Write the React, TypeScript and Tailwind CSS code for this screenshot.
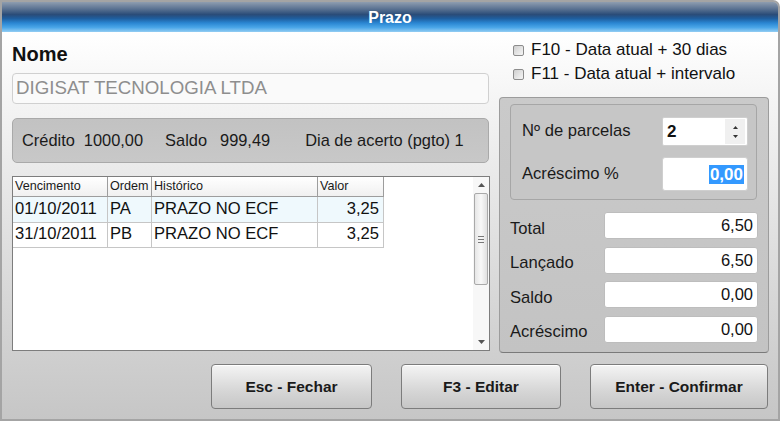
import React from "react";

const font = { fontFamily: '"Liberation Sans", Arial, sans-serif' };

function Field({ value, className = "" }: { value: string; className?: string }) {
  return (
    <div
      className={`h-[27px] w-[154px] bg-white border border-[#bdbdbd] rounded-[3px] flex items-center justify-end pr-[4px] text-[16.5px] text-[#111] ${className}`}
    >
      {value}
    </div>
  );
}

function Check({ label }: { label: string }) {
  return (
    <div className="h-[24px] flex items-center">
      <div className="ml-[14px] w-[11px] h-[11px] border border-[#8c8c8c] rounded-[2px] bg-[linear-gradient(135deg,#cfcfcf,#f6f6f6)]" />
      <span className="ml-[7px] text-[17px] text-[#111]">{label}</span>
    </div>
  );
}

function Button({ label, w }: { label: string; w: string }) {
  return (
    <div
      className={`${w} h-[45px] rounded-[4px] border border-[#7c7c7c] bg-[linear-gradient(to_bottom,#f4f4f4,#d6d6d6_60%,#c6c6c6)] shadow-[inset_0_1px_0_#ffffff] flex items-center justify-center font-bold text-[15.5px] text-[#1a1a1a]`}
    >
      {label}
    </div>
  );
}

const rows = [
  { d: "01/10/2011", o: "PA", h: "PRAZO NO ECF", v: "3,25", bg: "bg-[#eff9fd]" },
  { d: "31/10/2011", o: "PB", h: "PRAZO NO ECF", v: "3,25", bg: "bg-white" },
];

export default function App() {
  return (
    <div
      style={font}
      className="w-[780px] h-[421px] border-2 border-[#a4a4a4] rounded-tr-[7px] overflow-hidden flex flex-col bg-[#c4c4c4]"
    >
      {/* Title bar */}
      <div className="h-[30px] shrink-0 flex items-center justify-center bg-[linear-gradient(to_bottom,#8e9db0_0%,#5d7493_22%,#2a4c78_42%,#1f5e9e_55%,#2a86d2_70%,#4aa6e8_85%,#93cdf3_100%)]">
        <span className="text-white font-bold text-[16px] mt-[1px]">Prazo</span>
      </div>

      {/* Content */}
      <div className="flex-1 flex flex-col pl-[10px] pr-[9px] bg-[linear-gradient(to_bottom,#ffffff_0%,#f3f3f3_20%,#dcdcdc_60%,#c6c6c6_100%)]">
        <div className="flex gap-[9px]">
          {/* Left column */}
          <div className="w-[478px] flex flex-col">
            <div className="mt-[10px] h-[24px] leading-[24px] text-[20px] font-bold text-[#111]">Nome</div>
            <div className="mt-[7px] h-[31px] w-[477px] rounded-[4px] border border-[#d0d0d0] bg-[#fafafa] flex items-center pl-[3px] text-[18.7px] text-[#8e8e8e]">
              DIGISAT TECNOLOGIA LTDA
            </div>
            <div className="mt-[14px] h-[45px] w-[477px] rounded-[5px] border border-[#a9a9a9] bg-[linear-gradient(to_bottom,#c2c2c2,#c8c8c8)] flex items-center pl-[9px] text-[16.4px] text-[#1a1a1a]">
              <span>Crédito</span>
              <span className="ml-[9px]">1000,00</span>
              <span className="ml-[22px]">Saldo</span>
              <span className="ml-[13px]">999,49</span>
              <span className="ml-[35px]">Dia de acerto (pgto) 1</span>
            </div>
            {/* Table */}
            <div className="mt-[13px] h-[175px] w-[478px] border border-[#7d7d7d] bg-white flex">
              <div className="flex-1 flex flex-col">
                <div className="flex h-[20px] text-[12.6px] text-[#1a1a1a]">
                  {[
                    ["Vencimento", "w-[95px]"],
                    ["Ordem", "w-[44px]"],
                    ["Histórico", "w-[166px]"],
                    ["Valor", "w-[66px]"],
                  ].map(([t, w]) => (
                    <div
                      key={t}
                      className={`${w} h-full border-r border-b border-[#9d9d9d] bg-[linear-gradient(to_bottom,#ffffff,#f0f0f0)] flex items-center pl-[2px]`}
                    >
                      {t}
                    </div>
                  ))}
                </div>
                {rows.map((r) => (
                  <div key={r.d} className={`flex h-[25.5px] text-[16.6px] text-[#111]`}>
                    <div className={`w-[95px] ${r.bg} border-r border-b border-[#c6c6c6] flex items-center pl-[2px]`}>{r.d}</div>
                    <div className={`w-[44px] ${r.bg} border-r border-b border-[#c6c6c6] flex items-center pl-[2px]`}>{r.o}</div>
                    <div className={`w-[166px] ${r.bg} border-r border-b border-[#c6c6c6] flex items-center pl-[2px]`}>{r.h}</div>
                    <div className={`w-[66px] ${r.bg} border-r border-b border-[#c6c6c6] flex items-center justify-end pr-[4px]`}>{r.v}</div>
                  </div>
                ))}
              </div>
              {/* Scrollbar */}
              <div className="w-[16px] flex flex-col items-center bg-[#f7f7f7]">
                <div className="h-[16px] flex items-center justify-center">
                  <svg width="7" height="4" viewBox="0 0 7 4"><path d="M0 4 L3.5 0 L7 4 Z" fill="#555" /></svg>
                </div>
                <div className="w-[14px] h-[92px] rounded-[2px] border border-[#a9a9a9] bg-[linear-gradient(to_right,#e6e6e6,#f8f8f8,#e0e0e0)] flex flex-col items-center justify-center gap-[2px]">
                  <div className="w-[6px] h-px bg-[#777]" />
                  <div className="w-[6px] h-px bg-[#777]" />
                  <div className="w-[6px] h-px bg-[#777]" />
                </div>
                <div className="flex-1" />
                <div className="h-[16px] flex items-center justify-center">
                  <svg width="7" height="4" viewBox="0 0 7 4"><path d="M0 0 L3.5 4 L7 0 Z" fill="#555" /></svg>
                </div>
              </div>
            </div>
          </div>

          {/* Right column */}
          <div className="w-[270px] flex flex-col">
            <div className="mt-[6px]">
              <Check label="F10 - Data atual + 30 dias" />
              <Check label="F11 - Data atual + intervalo" />
            </div>
            <div className="mt-[11px] h-[256px] rounded-[4px] border border-[#9c9c9c] border-b-[#7a7a7a] bg-[linear-gradient(to_bottom,#cacaca,#c3c3c3)] pt-[6px] pl-[10px] pr-[10px] flex flex-col">
              <div className="w-[247px] h-[96px] rounded-[4px] border border-[#a6a6a6] bg-[#c6c6c6] pt-[12px] flex flex-col gap-[11px]">
                <div className="flex items-center justify-between pl-[11px] pr-[8px]">
                  <span className="text-[16.6px] text-[#1a1a1a]">Nº de parcelas</span>
                  <div className="w-[86px] h-[29px] bg-white border border-[#cfcfcf] rounded-[2px] flex items-center">
                    <span className="flex-1 pl-[4px] font-bold text-[17px] text-[#111]">2</span>
                    <div className="w-[20px] h-[25px] mr-[2px] bg-[#f0f0f0] flex flex-col items-center justify-center gap-[6px]">
                      <svg width="5" height="3" viewBox="0 0 5 3"><path d="M0 3 L2.5 0 L5 3 Z" fill="#333" /></svg>
                      <svg width="5" height="3" viewBox="0 0 5 3"><path d="M0 0 L2.5 3 L5 0 Z" fill="#333" /></svg>
                    </div>
                  </div>
                </div>
                <div className="flex items-center justify-between pl-[11px] pr-[8px]">
                  <span className="text-[16.6px] text-[#1a1a1a]">Acréscimo %</span>
                  <div className="w-[86px] h-[34px] bg-white border border-[#cfcfcf] rounded-[3px] flex items-center justify-end pr-[3px]">
                    <span className="bg-[#3399ff] text-white font-bold text-[17px] leading-[19px] px-[1px]">0,00</span>
                  </div>
                </div>
              </div>
              <div className="mt-[12px] flex flex-col gap-[7.67px]">
                {[
                  ["Total", "6,50"],
                  ["Lançado", "6,50"],
                  ["Saldo", "0,00"],
                  ["Acréscimo", "0,00"],
                ].map(([l, v]) => (
                  <div key={l} className="h-[27px] flex items-center justify-between">
                    <span className="text-[16.6px] leading-[20px] text-[#1a1a1a] mt-[6px]">{l}</span>
                    <Field value={v} />
                  </div>
                ))}
              </div>
            </div>
          </div>
        </div>

        {/* Buttons */}
        <div className="mt-[11px] flex justify-end gap-[29px] mr-[1px]">
          <Button label="Esc - Fechar" w="w-[161px]" />
          <Button label="F3 - Editar" w="w-[160px]" />
          <Button label="Enter - Confirmar" w="w-[178px]" />
        </div>
      </div>
    </div>
  );
}
